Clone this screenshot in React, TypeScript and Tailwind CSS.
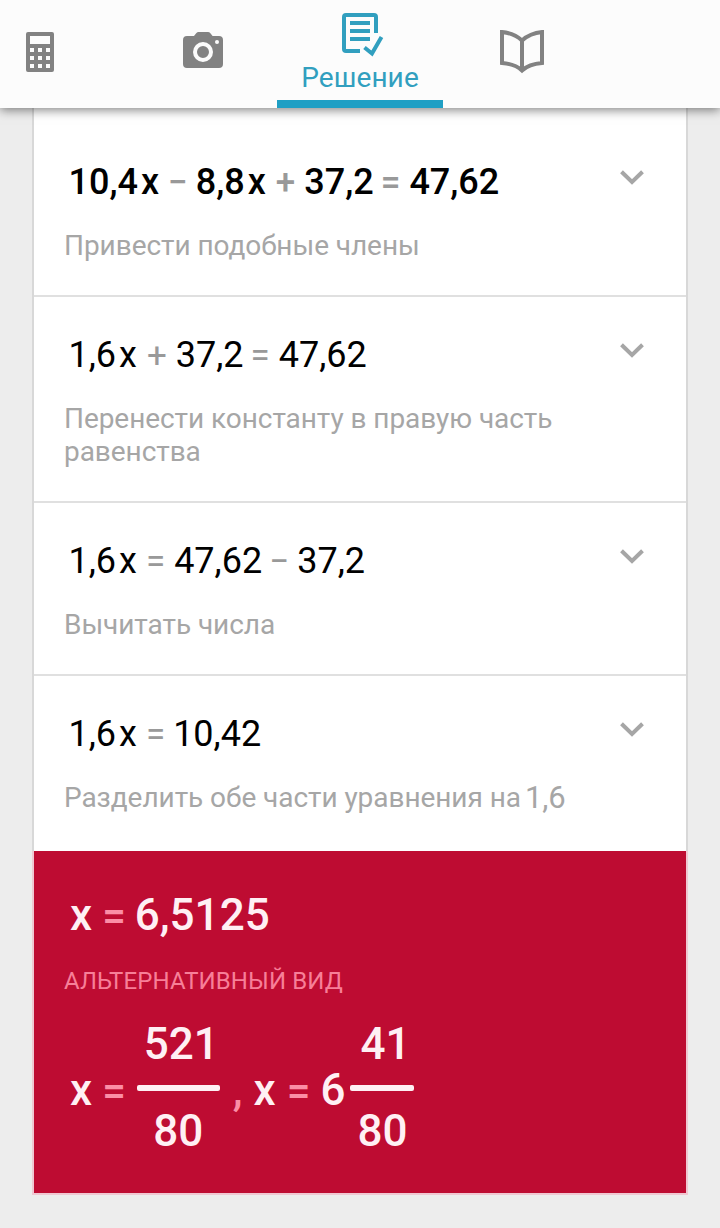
import React from 'react';

const Chevron = () => (
  <svg width="24" height="16" viewBox="0 0 24 16" fill="none" className="mr-[42px] mt-[46px] shrink-0">
    <path d="M1.5 1.8 L12 12 L22.5 1.8" stroke="#a6a6a6" strokeWidth="4" />
  </svg>
);

const CalculatorIcon = () => (
  <svg width="28" height="40" viewBox="0 0 28 40" fill="#828282">
    <path
      fillRule="evenodd"
      d="M2 0H26a2 2 0 0 1 2 2V38a2 2 0 0 1-2 2H2a2 2 0 0 1-2-2V2a2 2 0 0 1 2-2ZM4 4V12H24V4ZM4 16v4h4v-4ZM12 16v4h4v-4ZM20 16v4h4v-4ZM4 24v4h4v-4ZM12 24v4h4v-4ZM20 24v4h4v-4ZM4 32v4h4v-4ZM12 32v4h4v-4ZM20 32v4h4v-4Z"
    />
  </svg>
);

const CameraIcon = () => (
  <svg width="40" height="36" viewBox="0 0 40 36" fill="#828282">
    <path d="M4 4H11L13.2 1.2Q14.2 0 15.6 0H25Q26.4 0 27.4 1.2L29.6 4H36a4 4 0 0 1 4 4V32a4 4 0 0 1-4 4H4a4 4 0 0 1-4-4V8a4 4 0 0 1 4-4Z" />
    <circle cx="20" cy="20" r="8" fill="none" stroke="#fcfcfc" strokeWidth="4" />
    <circle cx="34" cy="10" r="2" fill="#fcfcfc" />
  </svg>
);

const SolutionIcon = () => (
  <svg width="42" height="44" viewBox="0 0 42 44" fill="none" stroke="#319fbf" strokeWidth="4">
    <path d="M18 38H4a2 2 0 0 1-2-2V4a2 2 0 0 1 2-2H32a2 2 0 0 1 2 2V20" />
    <path d="M8 10H28M8 18H28M8 26H28" />
    <path d="M22.5 34.5L30 40.5L39.5 24" />
  </svg>
);

const BookIcon = () => (
  <svg width="44" height="44" viewBox="0 0 44 44" fill="none" stroke="#828282" strokeWidth="4">
    <path d="M22 10.5Q14 3.2 2 2V33Q15 34 22 40.5Q29 34 42 33V2Q30 3.2 22 10.5V40" />
  </svg>
);

const tokenStyle: Record<string, string> = {
  '−': 'ml-[7px] mr-2 text-[#999999] text-[35px]',
  '+': 'ml-2 mr-[9px] text-[#999999] text-[35px]',
  '=': 'ml-[7px] mr-[9px] text-[#999999] text-[35px]',
  x: 'ml-[3px] mr-[2px]',
};

function Step({ parts, note, bold, className }: { parts: string[]; note: React.ReactNode; bold?: boolean; className: string }) {
  return (
    <div className={`flex justify-between border-[#e0e0e0] bg-white ${className}`}>
      <div className="w-[530px] pl-[30px] pt-[37px]">
        <div className={`flex h-[42px] items-baseline whitespace-nowrap pl-[4.5px] text-[36px] leading-[42px] text-black ${bold ? 'font-medium' : ''}`}>
          {parts.map((p, i) => (
            <span key={i} className={tokenStyle[p] ?? (p.startsWith('1') && i > 0 ? '-ml-px' : '')}>
              {p}
            </span>
          ))}
        </div>
        <div className="mt-[26px] text-[28px] leading-[33px] tracking-[-0.06px] text-[#a6a6a6]">{note}</div>
      </div>
      <Chevron />
    </div>
  );
}

const Equals = ({ className = 'ml-[10px] mr-[9px]' }: { className?: string }) => <span className={`text-[42px] text-[#fb8ea6] ${className}`}>=</span>;

function Fraction({ top, bottom, className }: { top: string; bottom: string; className: string }) {
  return (
    <span className={`flex flex-col items-center ${className}`}>
      <span className="pl-[6px] leading-[44px]">{top}</span>
      <span className="mb-[18px] mt-[19px] h-[6px] w-full rounded-[2px] bg-[#fff0f4]" />
      <span className="leading-[44px]">{bottom}</span>
    </span>
  );
}

export default function App() {
  return (
    <div className="h-[1228px] w-[720px] overflow-hidden bg-[#ededed] font-['Roboto',sans-serif]">
      <header className="relative z-10 flex h-[108px] bg-[#fcfcfc] shadow-[0_2px_10px_rgba(0,0,0,0.5)]">
        <div className="w-[129px] pl-[26px] pt-8">
          <CalculatorIcon />
        </div>
        <div className="flex w-[148px] justify-center pt-8">
          <CameraIcon />
        </div>
        <div className="flex w-[166px] flex-col items-center border-b-8 border-[#1f9fc4] pt-[13px]">
          <div className="pl-[6px]">
            <SolutionIcon />
          </div>
          <span className="mt-[5px] text-[28px] leading-[32px] tracking-[0.1px] text-[#319fbf]">Решение</span>
        </div>
        <div className="flex w-[158px] justify-center pt-[30px]">
          <BookIcon />
        </div>
      </header>
      <main className="mx-8">
        <div className="border-x-2 border-[#d8d8d8] bg-white">
          <Step className="h-[189px] border-b-2 pt-[16px]" bold parts={['10,4', 'x', '−', '8,8', 'x', '+', '37,2', '=', '47,62']} note="Привести подобные члены" />
          <Step className="h-[206px] border-b-2" parts={['1,6', 'x', '+', '37,2', '=', '47,62']} note="Перенести константу в правую часть равенства" />
          <Step className="h-[173px] border-b-2" parts={['1,6', 'x', '=', '47,62', '−', '37,2']} note="Вычитать числа" />
          <Step
            className="h-[175px]"
            parts={['1,6', 'x', '=', '10,42']}
            note={
              <span className="flex h-[33px] items-end whitespace-nowrap">
                Разделить обе части уравнения на<span className="ml-1 text-[31px]">1,6</span>
              </span>
            }
          />
        </div>
        <section className="h-[344px] border-x-2 border-b-2 border-[#f0c8d2] bg-[#be0c32] pl-[30px] pt-[38px] text-[44px] font-medium text-[#fff0f4]">
          <div className="flex h-[52px] items-baseline pl-[6px] leading-[52px]">
            x<Equals />
            6,5125
          </div>
          <div className="mt-[26px] text-[24px] font-normal leading-[28px] tracking-[0.1px] text-[#f77f98]">АЛЬТЕРНАТИВНЫЙ ВИД</div>
          <div className="mt-[27px] flex items-center pl-[6px] leading-[52px]">
            <span className="flex items-baseline pt-[6px]">
              x<Equals />
            </span>
            <Fraction top="521" bottom="80" className="ml-[2px] w-[83px]" />
            <span className="ml-[13px] pt-1 text-[#fb8ea6]">,</span>
            <span className="ml-[11px] flex items-baseline pt-[6px]">
              x<Equals className="ml-[11px] mr-[10px]" />6
            </span>
            <Fraction top="41" bottom="80" className="ml-[5px] w-[64px]" />
          </div>
        </section>
      </main>
    </div>
  );
}
